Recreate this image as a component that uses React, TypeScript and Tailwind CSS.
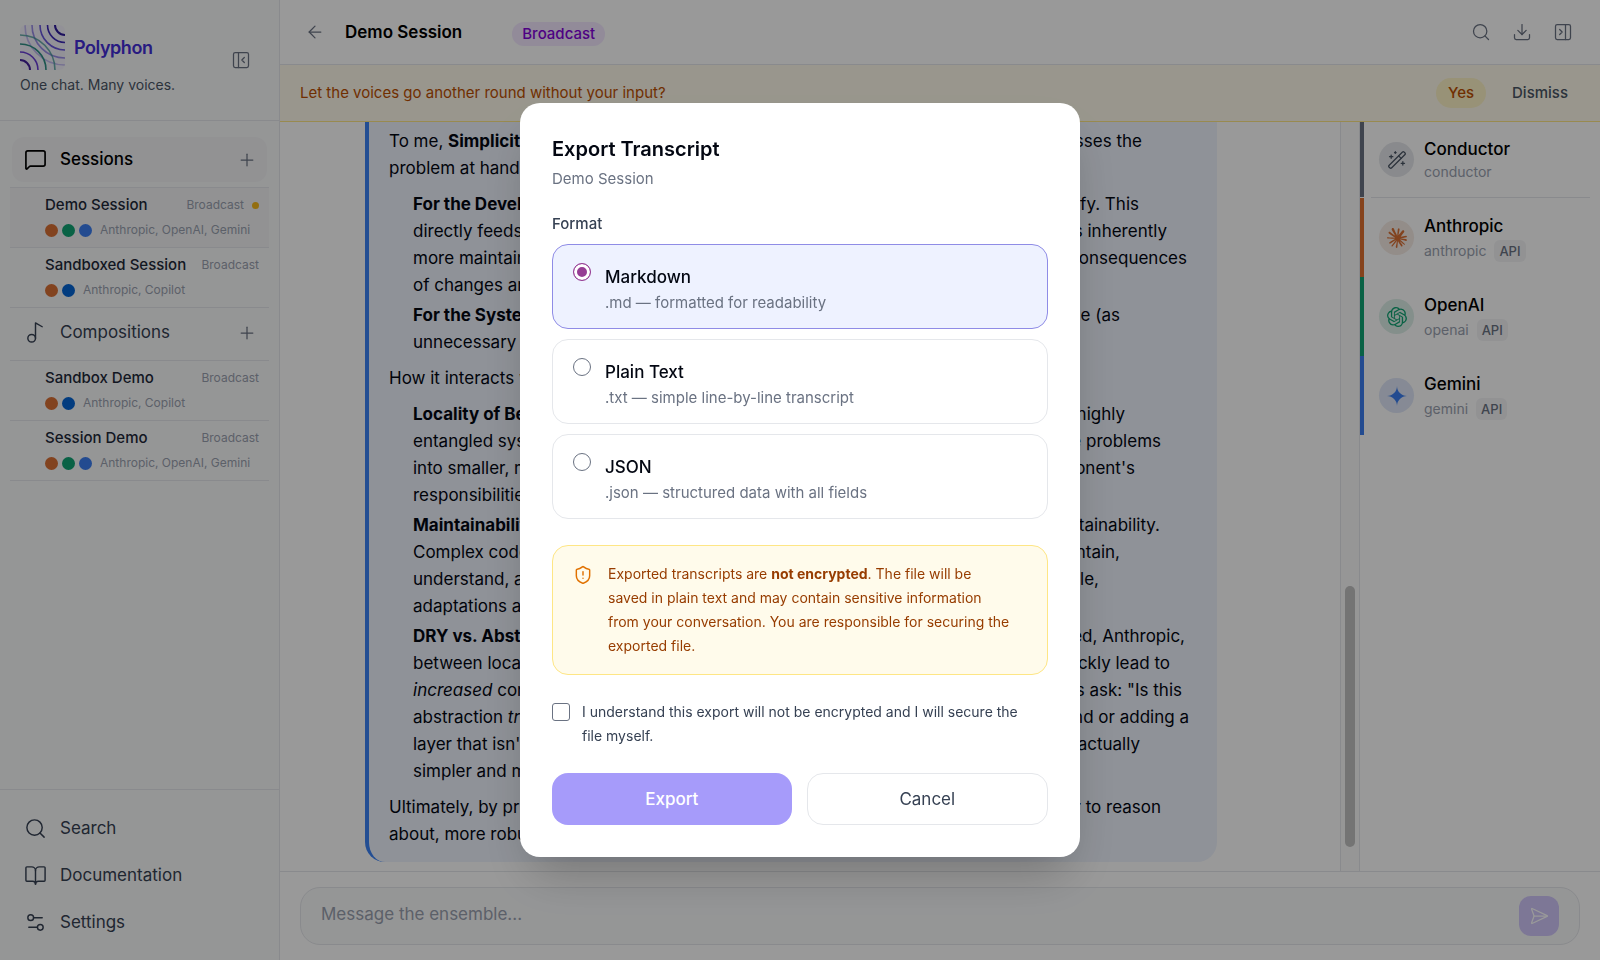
import type { ReactNode } from 'react'
import {
  ArrowLeft,
  BookOpen,
  Download,
  MessageSquare,
  Music2,
  PanelLeftClose,
  PanelRightClose,
  Plus,
  Search,
  SendHorizontal,
  Settings2,
  ShieldAlert,
  WandSparkles,
} from 'lucide-react'
import { SiClaude, SiGooglegemini, SiOpenai } from 'react-icons/si'

const providerDot: Record<string, string> = {
  Anthropic: 'bg-[#d97035]',
  OpenAI: 'bg-[#10a373]',
  Gemini: 'bg-[#3b7df0]',
  Copilot: 'bg-[#0464d4]',
}

type Session = { name: string; voices: string[]; active?: boolean }

const sessions: Session[] = [
  { name: 'Demo Session', voices: ['Anthropic', 'OpenAI', 'Gemini'], active: true },
  { name: 'Sandboxed Session', voices: ['Anthropic', 'Copilot'] },
]

const compositions: Session[] = [
  { name: 'Sandbox Demo', voices: ['Anthropic', 'Copilot'] },
  { name: 'Session Demo', voices: ['Anthropic', 'OpenAI', 'Gemini'] },
]

function Logo() {
  return (
    <svg viewBox="0 0 45 45" className="size-[45px] rounded-md" fill="none" strokeWidth="1.6" aria-hidden="true">
      <rect width="45" height="45" fill="#f3f2fc" />
      <g stroke="#4f39d6">
        <circle cx="45" cy="0" r="10" stroke="#2f1c9c" strokeWidth="2" />
        <circle cx="45" cy="0" r="17.5" stroke="#3f2bb8" />
        <circle cx="45" cy="0" r="25" opacity=".85" />
        <circle cx="45" cy="0" r="33" opacity=".55" />
        <circle cx="45" cy="0" r="40" opacity=".3" />
      </g>
      <g stroke="#6a3fd6">
        <circle cx="0" cy="45" r="10" stroke="#45209c" strokeWidth="2" />
        <circle cx="0" cy="45" r="18" />
        <circle cx="0" cy="45" r="26" stroke="#2f8f86" />
        <circle cx="0" cy="45" r="35" stroke="#3c9490" opacity=".75" />
      </g>
    </svg>
  )
}

function SessionItem({ name, voices, active }: Session) {
  return (
    <li className={`border-t border-gray-200 ${active ? 'bg-gray-100' : ''}`}>
      <a href="#" className="block pl-[35px] pr-2.5 pt-1.5 pb-[9px]">
        <span className="flex items-center leading-[22px]">
          <span className="text-[15px] font-medium text-gray-800">{name}</span>
          <span className="ml-auto text-[12px] text-gray-400">Broadcast</span>
          {active && <span className="ml-2 size-[7px] rounded-full bg-[#f5b81c]" />}
        </span>
        <span className="mt-[5px] -mb-px flex items-center gap-1 leading-[18px]">
          {voices.map((v) => (
            <span key={v} className={`size-[13px] shrink-0 rounded-full ${providerDot[v]}`} />
          ))}
          <span className="ml-1 text-[12px] text-gray-400">{voices.join(', ')}</span>
        </span>
      </a>
    </li>
  )
}

function Sidebar() {
  return (
    <aside className="flex w-[280px] shrink-0 flex-col border-r border-gray-200 bg-gray-50">
      <div className="flex h-[121px] items-center border-b border-gray-200 pl-5 pr-7">
        <div>
          <div className="flex items-center gap-[9px]">
            <Logo />
            <span className="text-[18px] font-semibold tracking-tight text-indigo-700">Polyphon</span>
          </div>
          <p className="mt-1 text-[14px] leading-[22px] text-gray-600">One chat. Many voices.</p>
        </div>
        <button className="ml-auto text-gray-500" aria-label="Collapse sidebar">
          <PanelLeftClose size={20} strokeWidth={1.5} />
        </button>
      </div>

      <nav className="flex-1 px-2.5 pt-4">
        <div className="mx-0.5 flex h-[45px] items-center rounded-xl bg-gray-100 pr-2.5 pl-3">
          <MessageSquare size={23} strokeWidth={1.75} />
          <span className="ml-[13px] text-[17px] font-medium text-black">Sessions</span>
          <button className="ml-auto text-gray-500" aria-label="New session">
            <Plus size={20} strokeWidth={1.5} />
          </button>
        </div>
        <ul className="mt-[5px] border-b border-gray-200">
          {sessions.map((s) => (
            <SessionItem key={s.name} {...s} />
          ))}
        </ul>

        <div className="mx-0.5 mt-0.5 flex h-[45px] items-center pr-2.5 pl-3 text-gray-700">
          <Music2 size={23} strokeWidth={1.5} />
          <span className="ml-[13px] text-[17px]">Compositions</span>
          <button className="ml-auto text-gray-500" aria-label="New composition">
            <Plus size={20} strokeWidth={1.5} />
          </button>
        </div>
        <ul className="mt-[5px] border-b border-gray-200">
          {compositions.map((s) => (
            <SessionItem key={s.name} {...s} />
          ))}
        </ul>
      </nav>

      <div className="border-t border-gray-200 px-3 pt-[15px] pb-3.5 text-[17px] text-gray-700">
        {[
          { label: 'Search', Icon: Search },
          { label: 'Documentation', Icon: BookOpen },
          { label: 'Settings', Icon: Settings2 },
        ].map(({ label, Icon }) => (
          <a key={label} href="#" className="flex h-[47px] items-center gap-[13px] px-3">
            <Icon size={23} strokeWidth={1.5} />
            {label}
          </a>
        ))}
      </div>
    </aside>
  )
}

// Both halves of a message line; `w` is how far the line runs.
function Line({ w, end, children }: { w: number; end?: string; children: ReactNode }) {
  return (
    <span className="flex justify-between whitespace-nowrap" style={{ width: w }}>
      <span>{children}</span>
      {end && <span>{end}</span>}
    </span>
  )
}

function Message() {
  return (
    <div className="mr-[38px] rounded-[20px] border-l-4 border-[#3b82f6] bg-[#eff4fe] pt-10 pr-5 pb-3.5 pl-5 text-[17px] leading-[27px] text-gray-950">
      <p>
        <Line w={753} end="addresses the">To me, <b>Simplicity</b></Line>
        <Line w={753}>problem at hand.</Line>
      </p>
      <ul className="my-[9px] space-y-[3px] pl-6">
        <li>
          <Line w={726} end="modify. This"><b>For the Developer:</b></Line>
          <Line w={754} end="is inherently">directly feeds into</Line>
          <Line w={774} end="consequences">more maintainable</Line>
          <Line w={774}>of changes are</Line>
        </li>
        <li>
          <Line w={707} end="surface (as"><b>For the System:</b></Line>
          <Line w={774}>unnecessary parts</Line>
        </li>
      </ul>
      <p>How it interacts with</p>
      <ul className="my-[9px] space-y-[3px] pl-6">
        <li>
          <Line w={712} end="in a highly"><b>Locality of Behavior:</b></Line>
          <Line w={748} end="isolate problems">entangled system</Line>
          <Line w={722} end="component's">into smaller, more</Line>
          <Line w={774}>responsibilities</Line>
        </li>
        <li>
          <Line w={747} end="maintainability."><b>Maintainability:</b></Line>
          <Line w={707} end="maintain,">Complex code is</Line>
          <Line w={686} end="flexible,">understand, and</Line>
          <Line w={774}>adaptations are</Line>
        </li>
        <li>
          <Line w={772} end="mentioned, Anthropic,"><b>DRY vs. Abstraction:</b></Line>
          <Line w={757} end="quickly lead to">between local</Line>
          <Line w={769} end={'always ask: "Is this'}><i>increased</i> complexity</Line>
          <Line w={776} end="understand or adding a">abstraction <i>truly</i></Line>
          <Line w={727} end="is actually">layer that isn't</Line>
          <Line w={774}>simpler and more</Line>
        </li>
      </ul>
      <p>
        <Line w={772} end="easier to reason">Ultimately, by prioritizing</Line>
        <Line w={772}>about, more robust</Line>
      </p>
    </div>
  )
}

const voices = [
  { name: 'Anthropic', id: 'anthropic', border: 'border-[#e07030]', tint: 'bg-[#f6ebe4] text-[#d97035]', Icon: SiClaude },
  { name: 'OpenAI', id: 'openai', border: 'border-[#10a373]', tint: 'bg-[#dcefe8] text-[#10a373]', Icon: SiOpenai },
  { name: 'Gemini', id: 'gemini', border: 'border-[#3b7df0]', tint: 'bg-[#dfe7f8] text-[#3b7df0]', Icon: SiGooglegemini },
]

function VoicesPanel() {
  return (
    <aside className="w-[241px] shrink-0 border-l border-gray-200">
      <div className="flex h-[75px] items-center border-l-4 border-gray-500 pl-[15px]">
        <span className="flex size-[35px] items-center justify-center rounded-full bg-gray-200 text-gray-600">
          <WandSparkles size={20} strokeWidth={1.5} />
        </span>
        <div className="ml-2.5">
          <p className="text-[17px] leading-[23px] font-medium">Conductor</p>
          <p className="text-[14px] leading-[21px] text-gray-400">conductor</p>
        </div>
      </div>
      <hr className="mr-2.5 ml-[11px] border-gray-200" />
      {voices.map(({ name, id, border, tint, Icon }) => (
        <div key={id} className={`flex h-[79px] items-center border-l-4 pl-[15px] ${border}`}>
          <span className={`flex size-[35px] items-center justify-center rounded-full ${tint}`}>
            <Icon size={20} />
          </span>
          <div className="mt-px ml-2.5">
            <p className="text-[17px] leading-[25px] font-medium">{name}</p>
            <p className="flex items-center gap-2 text-[14px] leading-[24px] text-gray-400">
              {id}
              <span className="rounded-md bg-gray-100 px-[5px] text-[13px] leading-[22px] font-medium text-gray-500">API</span>
            </p>
          </div>
        </div>
      ))}
    </aside>
  )
}

const formats = [
  { id: 'md', name: 'Markdown', hint: '.md — formatted for readability' },
  { id: 'txt', name: 'Plain Text', hint: '.txt — simple line-by-line transcript' },
  { id: 'json', name: 'JSON', hint: '.json — structured data with all fields' },
]

function ExportDialog() {
  return (
    <div className="fixed inset-0 flex items-center justify-center bg-black/40">
      <div
        role="dialog"
        aria-labelledby="export-title"
        className="w-[560px] rounded-[20px] bg-white px-8 pt-[31px] pb-8 shadow-2xl"
      >
        <h2 id="export-title" className="text-[20px] leading-[30px] font-semibold text-gray-950">Export Transcript</h2>
        <p className="mt-1 text-[15px] leading-[22px] text-gray-500">Demo Session</p>

        <fieldset className="mt-[23px]">
          <legend className="text-[15px] leading-[22px] font-medium text-gray-700">Format</legend>
          <div className="mt-[9px] space-y-2.5">
            {formats.map(({ id, name, hint }) => (
              <label
                key={id}
                className="flex h-[85px] rounded-2xl border border-gray-200 px-5 pt-[18px] has-checked:border-[#8f8ce6] has-checked:bg-indigo-50"
              >
                <input
                  type="radio"
                  name="format"
                  value={id}
                  defaultChecked={id === 'md'}
                  className="size-[18px] shrink-0 appearance-none rounded-full border border-gray-500 bg-white checked:border-[#963d94] checked:bg-[#963d94] checked:shadow-[inset_0_0_0_3px_#fff]"
                />
                <span className="ml-3.5">
                  <span className="block text-[17px] leading-[28px] font-medium text-gray-950">{name}</span>
                  <span className="block text-[15px] leading-[24px] text-gray-500">{hint}</span>
                </span>
              </label>
            ))}
          </div>
        </fieldset>

        <div className="mt-[26px] flex rounded-2xl border border-amber-200 bg-amber-50 px-5 py-4 text-amber-800">
          <ShieldAlert size={20} strokeWidth={1.75} className="mt-[3px] shrink-0 text-amber-600" />
          <p className="ml-[15px] text-[14px] leading-[24px]">
            Exported transcripts are <b>not encrypted</b>. The file will be
            <br />
            saved in plain text and may contain sensitive information
            <br />
            from your conversation. You are responsible for securing the
            <br />
            exported file.
          </p>
        </div>

        <label className="mt-[25px] flex text-[14px] leading-[24px] text-gray-700">
          <input
            type="checkbox"
            className="mt-[3px] size-[18px] shrink-0 appearance-none rounded-[3px] border border-gray-500 bg-white"
          />
          <span className="ml-3">
            I understand this export will not be encrypted and I will secure the
            <br />
            file myself.
          </span>
        </label>

        <div className="mt-[25px] flex gap-[15px] text-[17px]">
          <button disabled className="h-[52px] flex-1 rounded-2xl bg-indigo-600 pt-0.5 font-medium text-white opacity-50">
            Export
          </button>
          <button className="h-[52px] flex-1 rounded-2xl border border-gray-200 pt-0.5 text-gray-700">Cancel</button>
        </div>
      </div>
    </div>
  )
}

export default function App() {
  return (
    <div className="flex h-screen overflow-hidden bg-white font-['Inter',sans-serif] text-black">
      <Sidebar />

      <main className="flex min-w-0 flex-1 flex-col">
        <header className="flex h-[65px] shrink-0 items-center border-b border-gray-200 pr-[27px] pl-[25px]">
          <button className="text-gray-500" aria-label="Back">
            <ArrowLeft size={20} strokeWidth={1.5} />
          </button>
          <h1 className="mt-0.5 ml-5 text-[17px] font-semibold">Demo Session</h1>
          <span className="mt-[3px] ml-[50px] rounded-full bg-purple-100 px-2.5 text-[15px] leading-[24px] font-medium text-purple-700">
            Broadcast
          </span>
          <div className="ml-auto flex gap-[21px] text-gray-500">
            <button aria-label="Search transcript"><Search size={20} strokeWidth={1.5} /></button>
            <button aria-label="Export transcript"><Download size={20} strokeWidth={1.5} /></button>
            <button aria-label="Close panel"><PanelRightClose size={20} strokeWidth={1.5} /></button>
          </div>
        </header>

        <div className="flex h-[57px] shrink-0 items-center border-b border-amber-200 bg-amber-50 px-5 text-[15px]">
          <p className="text-amber-700">Let the voices go another round without your input?</p>
          <button className="ml-auto h-[30px] rounded-full bg-amber-100 px-3 font-medium text-amber-700">Yes</button>
          <button className="ml-3.5 h-[30px] px-3 font-medium text-gray-600">Dismiss</button>
        </div>

        <div className="flex min-h-0 flex-1">
          <div className="flex min-w-0 flex-1 flex-col justify-end overflow-hidden pb-[9px]">
            <div className="mx-auto w-full max-w-[890px]">
              <Message />
            </div>
          </div>
          <div className="flex w-[19px] shrink-0 flex-col items-center justify-end border-l border-gray-200 bg-[#fafafa] pb-6">
            <div className="h-[261px] w-2.5 rounded-full bg-[#c1c1c1]" />
          </div>
          <VoicesPanel />
        </div>

        <div className="shrink-0 border-t border-gray-200 px-5 pt-[15px] pb-[15px]">
          <div className="flex h-[58px] items-center rounded-[20px] border border-gray-200 bg-gray-50 pr-5 pl-5">
            <input
              aria-label="Message"
              placeholder="Message the ensemble..."
              className="h-full flex-1 pb-1 text-[17px] outline-none placeholder:text-gray-400"
            />
            <button
              disabled
              aria-label="Send"
              className="flex size-10 items-center justify-center rounded-xl bg-[#d0c6fb] text-white"
            >
              <SendHorizontal size={20} strokeWidth={1.5} />
            </button>
          </div>
        </div>
      </main>

      <ExportDialog />
    </div>
  )
}
